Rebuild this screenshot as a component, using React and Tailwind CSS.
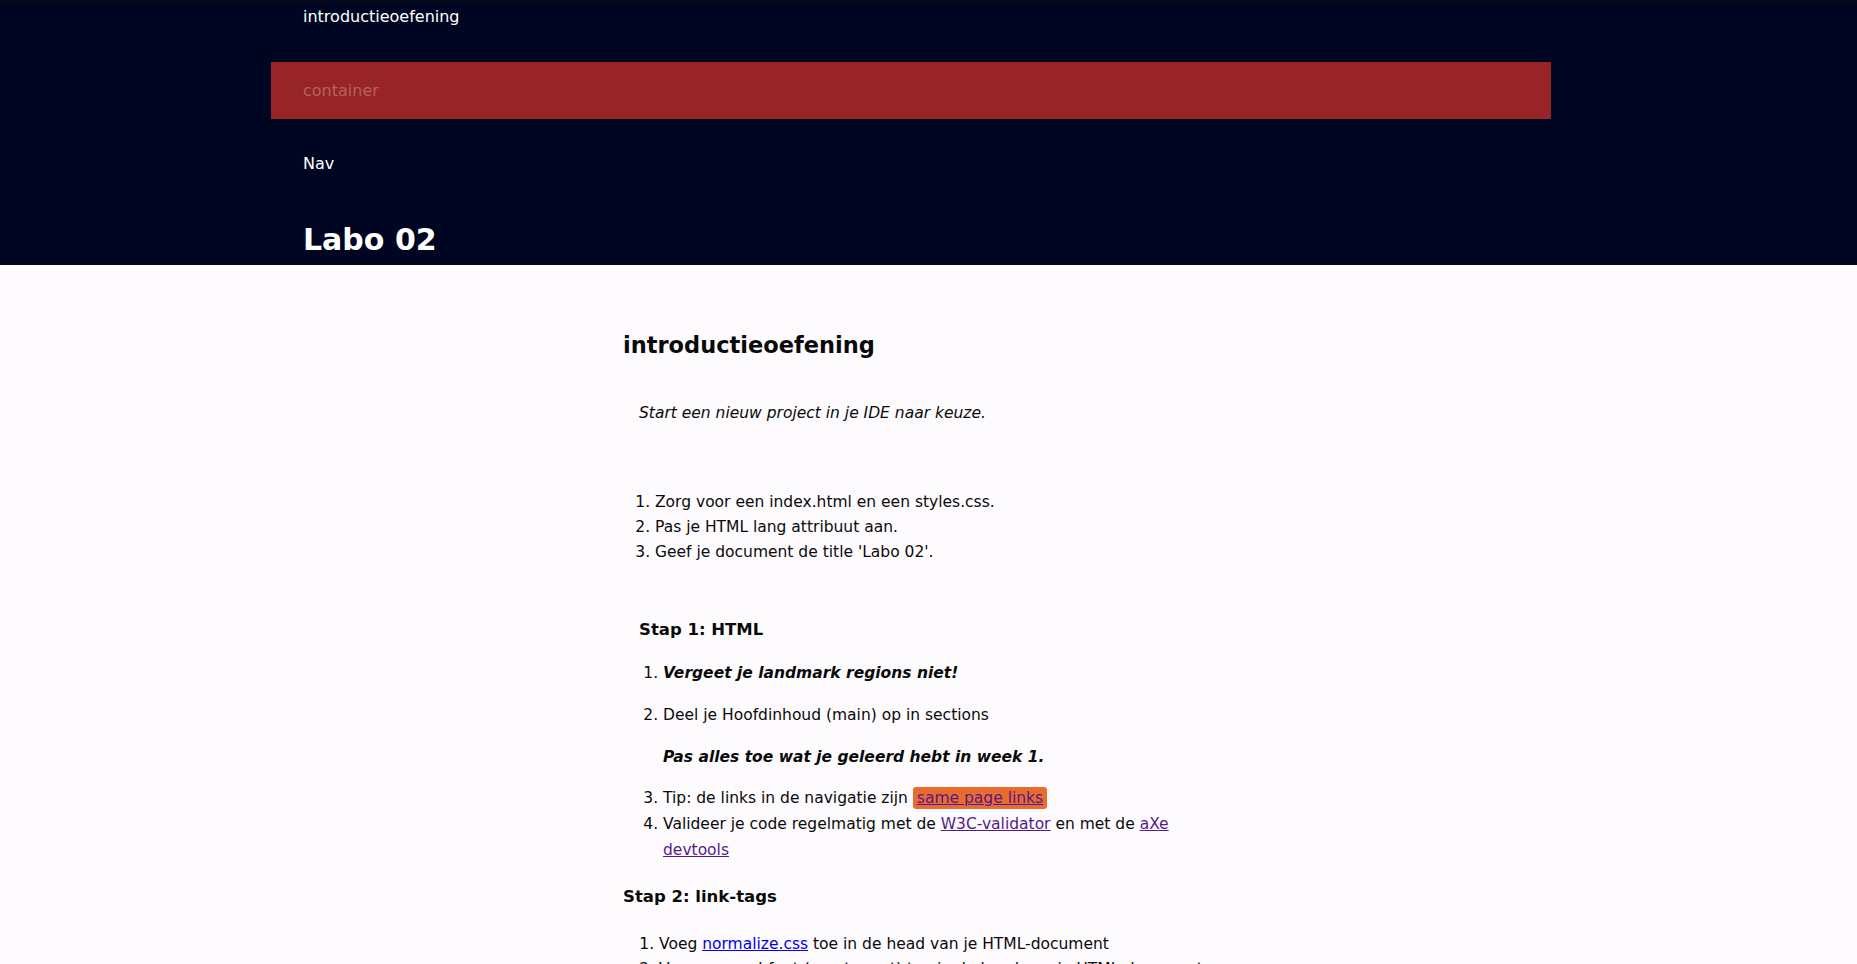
export default function App() {
  const font = { fontFamily: '"DejaVu Sans", "Liberation Sans", sans-serif' };
  return (
    <div className="min-h-screen bg-[#fdfbfd] text-[#0a0a0a]" style={font}>
      {/* Site header */}
      <header className="border-t border-[#0b0b0b] bg-[#000622] pb-[7px] text-white">
        <div className="ml-[271px] w-[1280px]">
          <div className="px-8 pt-[4px] text-[16px] leading-[24px]">introductieoefening</div>
          <div className="mt-[33px] flex h-[57px] items-center bg-[#972527] px-8 text-[16px] leading-[24px] text-[#b8605f]">
            container
          </div>
          <nav className="mt-[33px] px-8 text-[16px] leading-[24px]">Nav</nav>
          <h1 className="mt-[46px] px-8 text-[30px] font-bold leading-[36px]">Labo 02</h1>
        </div>
      </header>

      {/* Main content */}
      <main className="ml-[623px] w-[600px] pb-10 text-[15.5px] leading-[25px]">
        <section>
          <h2 className="pt-[67px] text-[22.5px] font-bold leading-[27px]">introductieoefening</h2>
          <div className="pl-4">
            <p className="mt-[42px] italic">Start een nieuw project in je IDE naar keuze.</p>
            <ol className="mt-[64px] list-outside list-decimal pl-4">
              <li>Zorg voor een index.html en een styles.css.</li>
              <li>Pas je HTML lang attribuut aan.</li>
              <li>Geef je document de title 'Labo 02'.</li>
            </ol>

            <h3 className="mt-[55px] text-[16.5px] font-bold leading-[20px]">Stap 1: HTML</h3>
            <ol className="mt-[21px] list-outside list-decimal pl-6">
              <li>
                <p className="font-bold italic">Vergeet je landmark regions niet!</p>
              </li>
              <li className="mt-[17px]">
                <p>Deel je Hoofdinhoud (main) op in sections</p>
                <p className="mt-[17px] font-bold italic">Pas alles toe wat je geleerd hebt in week 1.</p>
              </li>
              <li className="mt-[16px]">
                Tip: de links in de navigatie zijn{' '}
                <span className="rounded-[3px] bg-[#ea6b2e] px-[4px] py-[2px]">
                  <a href="#stap-1" className="text-[#551a8b] underline">same page links</a>
                </span>
              </li>
              <li className="leading-[26px]">
                Valideer je code regelmatig met de{' '}
                <a href="#w3c" className="text-[#551a8b] underline">W3C-validator</a> en met de{' '}
                <a href="#axe" className="text-[#551a8b] underline">aXe devtools</a>
              </li>
            </ol>
          </div>
        </section>

        <section>
          <h3 className="mt-[24px] text-[16.5px] font-bold leading-[20px]">Stap 2: link-tags</h3>
          <ol className="mt-[25px] list-outside list-decimal pl-9">
            <li>
              Voeg <a href="#normalize" className="text-[#0000ee] underline">normalize.css</a> toe in de head van je HTML-document
            </li>
            <li>Voeg een webfont (montserrat) toe in de head van je HTML-document</li>
            <li>Link je styles.css in de head van je HTML-document</li>
          </ol>
        </section>
      </main>
    </div>
  );
}
